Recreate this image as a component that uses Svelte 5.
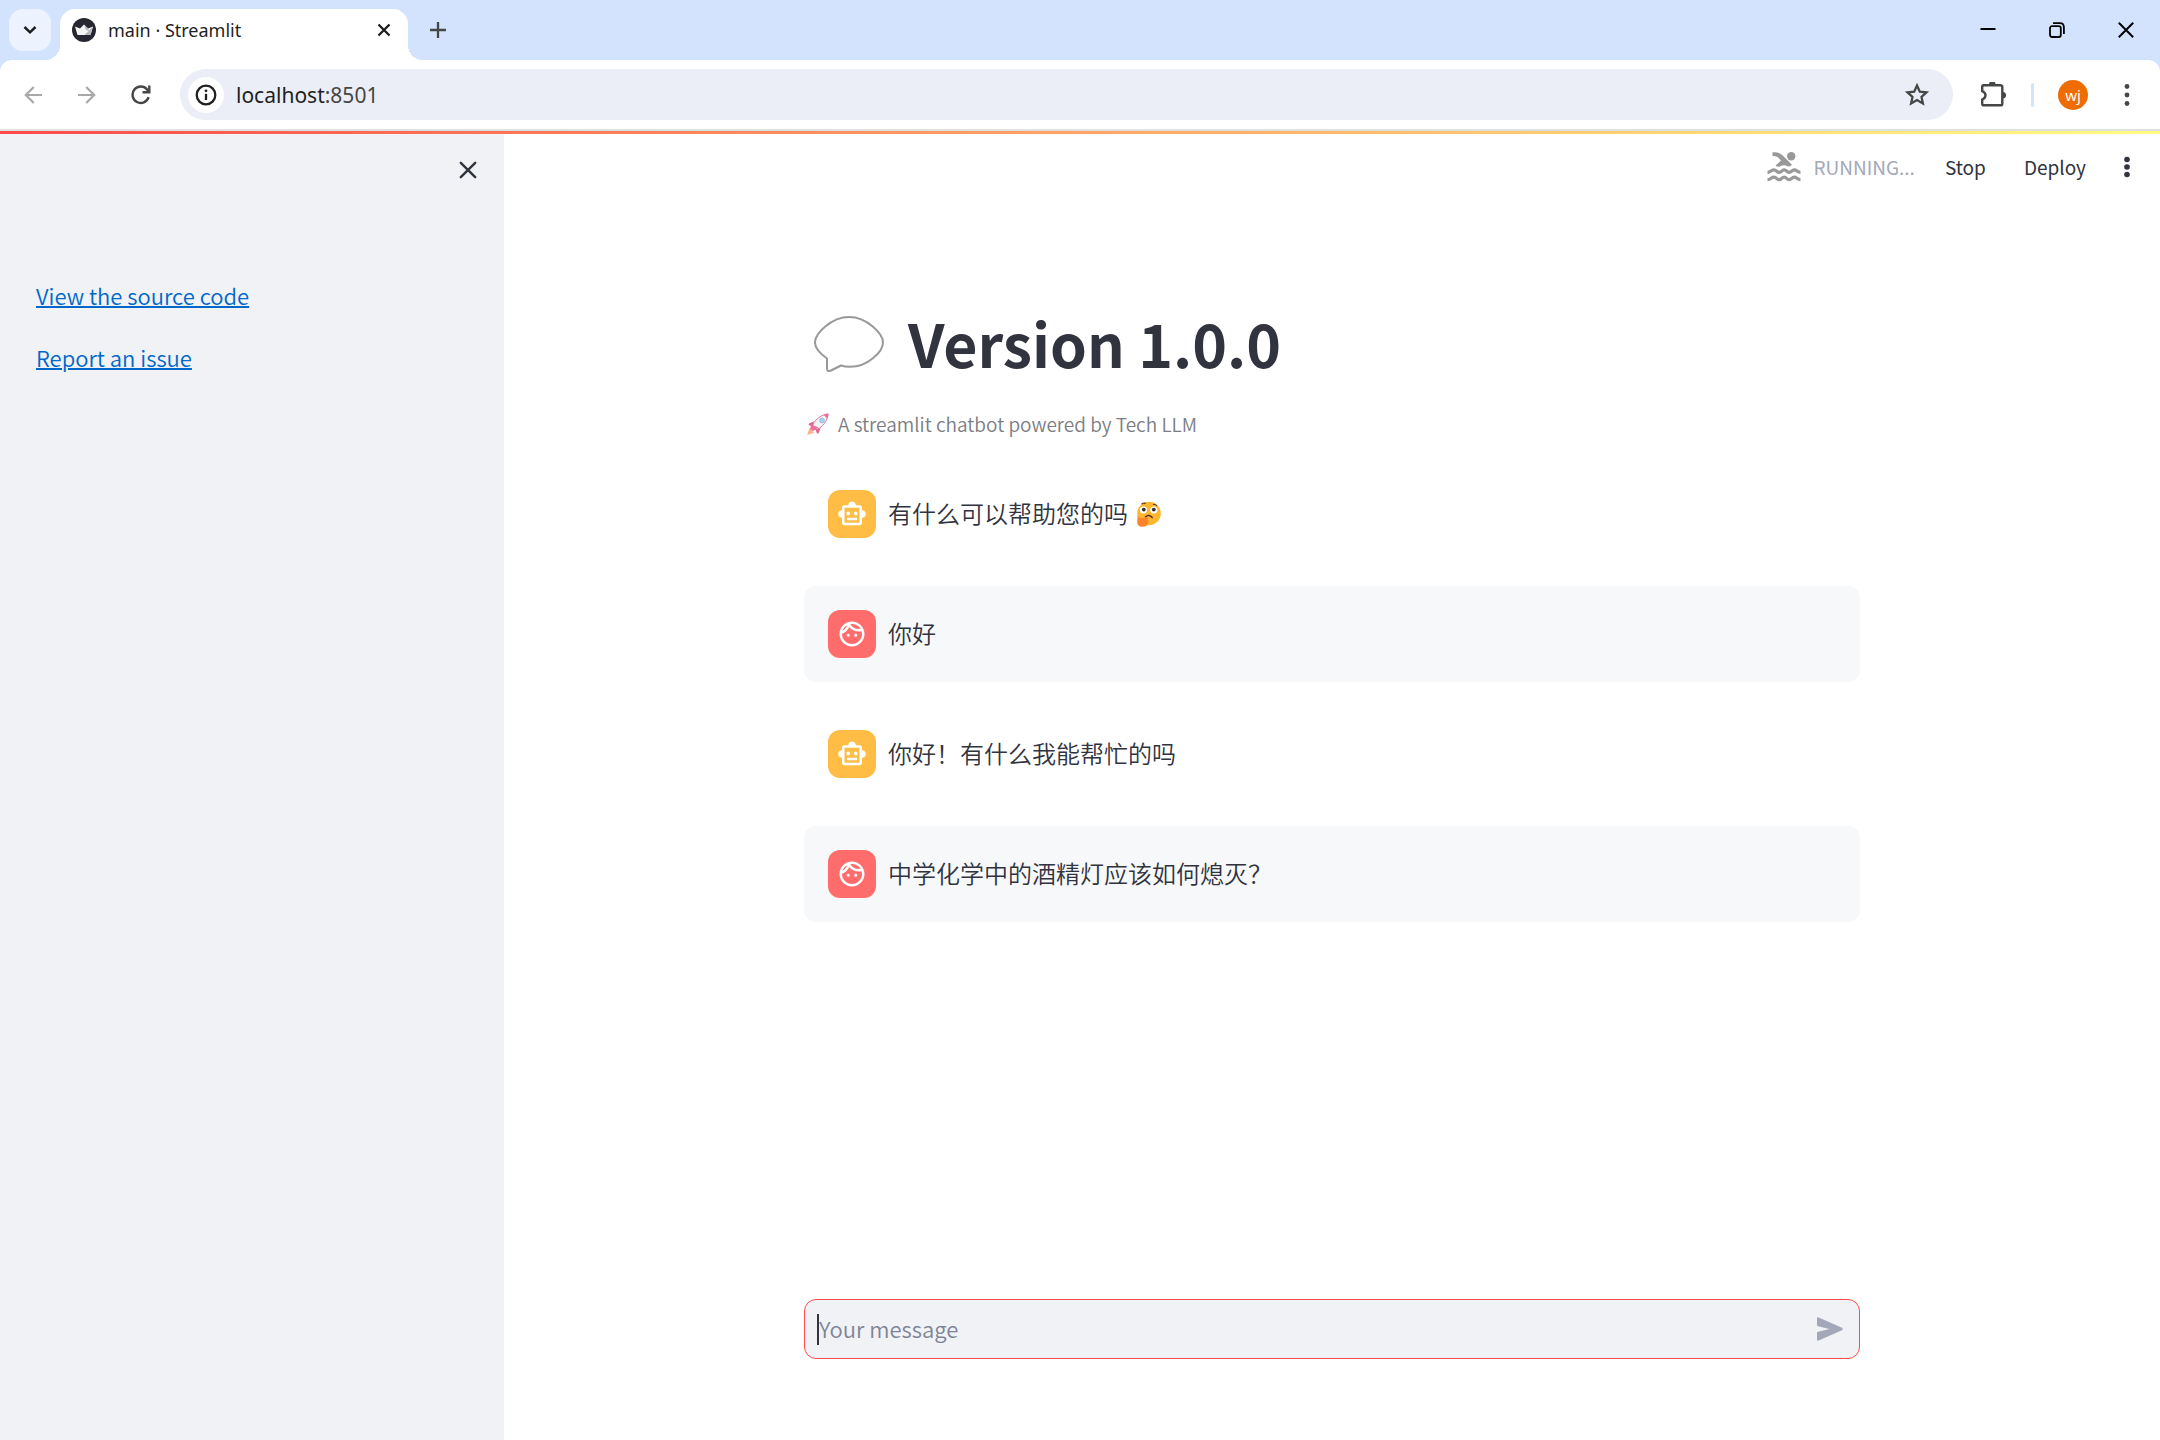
<script lang="ts">
  type Message = { role: 'assistant' | 'user'; text: string; thinking?: boolean };

  const messages: Message[] = [
    { role: 'assistant', text: '有什么可以帮助您的吗', thinking: true },
    { role: 'user', text: '你好' },
    { role: 'assistant', text: '你好！有什么我能帮忙的吗' },
    { role: 'user', text: '中学化学中的酒精灯应该如何熄灭？' }
  ];

  let draft = $state('');
</script>

<div class="window">
  <div class="tabstrip">
    <button class="tab-search" aria-label="Search tabs">
      <svg width="14" height="10" viewBox="0 0 14 10"><path d="M1.5 2 7 7.300 12.500 2" fill="none" stroke="#1c1d20" stroke-width="2.500" /></svg>
    </button>
    <div class="tab">
      <svg class="favicon" width="24" height="24" viewBox="0 0 24 24">
        <circle cx="12" cy="12" r="12" fill="#262730" />
        <path d="M3 8.500 8 10.500 12 6.500 16 10.500 21 8.500 18.500 17H5.500Z" fill="#f4f4f4" />
        <path d="M12 6.500 16 10.500 17.500 13 14 12ZM21 8.500 18.500 17H12.500Z" fill="#b9b9bb" />
      </svg>
      <span class="tab-title">main · Streamlit</span>
      <button class="tab-close" aria-label="Close tab">
        <svg width="14" height="14" viewBox="0 0 14 14"><path d="M1.500 1.500 12.500 12.500M12.500 1.500 1.500 12.500" stroke="#1c1d20" stroke-width="2.300" /></svg>
      </button>
    </div>
    <button class="new-tab" aria-label="New tab">
      <svg width="16" height="16" viewBox="0 0 16 16"><path d="M8 0V16M0 8H16" stroke="#444746" stroke-width="2.300" /></svg>
    </button>
    <div class="window-controls">
      <button aria-label="Minimize"><svg width="16" height="16" viewBox="0 0 16 16"><path d="M.5 7H15.500" stroke="#000" stroke-width="2" /></svg></button>
      <button aria-label="Restore"><svg width="16" height="16" viewBox="0 0 16 16" fill="none" stroke="#000" stroke-width="1.800"><rect x="1" y="4.200" width="10.800" height="10.800" rx="2" /><path d="M4 1.200H11Q14.900 1.200 14.900 5.500V12" /></svg></button>
      <button aria-label="Close window"><svg width="16" height="16" viewBox="0 0 16 16"><path d="M.8.8 15.200 15.200M15.200.8.8 15.200" stroke="#000" stroke-width="2" /></svg></button>
    </div>
  </div>

  <div class="toolbar">
    <button class="nav" aria-label="Back">
      <svg width="18" height="18" viewBox="0 0 18 18" fill="none" stroke="#a8a8a8" stroke-width="2.200"><path d="M18 9H1.800M9.800 1 1.800 9 9.800 17" /></svg>
    </button>
    <button class="nav" aria-label="Forward">
      <svg width="18" height="18" viewBox="0 0 18 18" fill="none" stroke="#a8a8a8" stroke-width="2.200"><path d="M0 9H16.200M8.200 1 16.200 9 8.200 17" /></svg>
    </button>
    <button class="nav" aria-label="Reload">
      <svg width="20" height="20" viewBox="0 0 20 20" fill="none" stroke="#444746" stroke-width="2.400"><path d="M17.600 12.200A8.200 8.200 0 1 1 16 4.400L18 6.600" /><path d="M18.300 .5V7.300H11.500" /></svg>
    </button>
    <div class="omnibox">
      <button class="site-info" aria-label="Site information">
        <svg width="22" height="22" viewBox="0 0 22 22"><circle cx="11" cy="11" r="9.300" fill="none" stroke="#1f1f1f" stroke-width="2.300" /><path d="M11 9.800V16" stroke="#1f1f1f" stroke-width="2.300" /><circle cx="11" cy="6.800" r="1.400" fill="#1f1f1f" /></svg>
      </button>
      <span class="url">localhost<span class="port">:8501</span></span>
      <button class="bookmark" aria-label="Bookmark this page">
        <svg width="26" height="26" viewBox="0 0 26 26"><path d="M13 3.500 15.800 9.700 22.500 10.400 17.500 14.900 18.900 21.500 13 18.100 7.100 21.500 8.500 14.900 3.500 10.400 10.200 9.700Z" fill="none" stroke="#444746" stroke-width="2.300" /></svg>
      </button>
    </div>
    <button class="extensions" aria-label="Extensions">
      <svg width="26" height="26" viewBox="0 0 26 26"><path d="M2.200 4.800Q2.200 3.200 3.800 3.200H19.800Q22.300 3.200 22.300 4.800V21.700Q22.300 23.300 20.800 23.300H3.800Q2.200 23.300 2.200 21.700V17.500Q5.500 16.200 5.500 13.300 5.500 10.400 2.200 9.100Z" fill="none" stroke="#444746" stroke-width="2.400" /><path d="M9 2.500A3.300 3.300 0 0 1 15.600 2.500ZM22.800 10A3.300 3.300 0 0 1 22.800 16.600Z" fill="#444746" /></svg>
    </button>
    <span class="divider"></span>
    <button class="profile">wj</button>
    <button class="menu" aria-label="Browser menu">
      <svg width="6" height="22" viewBox="0 0 6 22" fill="#444746"><circle cx="3" cy="2.500" r="2.400" /><circle cx="3" cy="11" r="2.400" /><circle cx="3" cy="19.500" r="2.400" /></svg>
    </button>
  </div>

  <div class="decoration"></div>

  <div class="app">
    <aside>
      <button class="collapse" aria-label="Close sidebar">
        <svg width="18" height="18" viewBox="0 0 18 18"><path d="M1.800 1.800 16.200 16.200M16.200 1.800 1.800 16.200" stroke="#31333f" stroke-width="2.400" stroke-linecap="round" /></svg>
      </button>
      <nav>
        <a href="#source">View the source code</a>
        <a href="#issue">Report an issue</a>
      </nav>
    </aside>

    <main>
      <header>
        <div class="status">
          <svg width="34" height="30" viewBox="0 0 34 30">
            <g fill="none" stroke="#999" stroke-width="3.200">
              <path d="M.5 20.300C4 20.300 3.800 17.800 6.600 17.800 9.800 17.800 9.800 20.300 12 20.300 15 20.300 14.500 17.800 17 17.800 20 17.800 19.500 20.300 22 20.300 25 20.300 24.500 17.800 27.300 17.800 30 17.800 30 20.300 33.500 20.300" />
              <path d="M.5 27.700C4 27.700 3.800 25.200 6.600 25.200 9.800 25.200 9.800 27.700 12 27.700 15 27.700 14.500 25.200 17 25.200 20 25.200 19.500 27.700 22 27.700 25 27.700 24.500 25.200 27.300 25.200 30 25.200 30 27.700 33.500 27.700" />
            </g>
            <path d="M5.500 .2C10 0 13 .8 15.500 3.300L25 12.800C23 14.300 22.400 15 20.700 14.200 18 12.900 15.500 13 12.800 14.400 11.500 15 10 14.400 8.500 13.700L14 8.500 12.800 7.200C10.800 5.100 9.500 4 5.500 4.100Z" fill="#999" />
            <circle cx="24.200" cy="4.200" r="4.200" fill="#999" />
          </svg>
          <span>RUNNING...</span>
        </div>
        <button class="stop">Stop</button>
        <button class="deploy">Deploy</button>
        <button class="app-menu" aria-label="Main menu">
          <svg width="6" height="22" viewBox="0 0 6 22" fill="#31333f"><circle cx="3" cy="3.500" r="2.800" /><circle cx="3" cy="11" r="2.800" /><circle cx="3" cy="18.500" r="2.800" /></svg>
        </button>
      </header>

      <div class="content">
        <h1>
          <svg width="72" height="58" viewBox="0 0 72 58"><path d="M36 3C18 3 2 20 2 28.500 2 34 7 39.500 14 44.500V54.500C14 57 15.500 57.500 18 56.500L28 51.500C31 52.500 33.500 52.800 37 52.800 55 52.800 70 37.500 70 28.500 70 20 54 3 36 3Z" fill="none" stroke="#999" stroke-width="2" stroke-linejoin="round" /></svg>
          <span>Version 1.0.0</span>
        </h1>
        <p class="caption">
          <svg width="24" height="24" viewBox="0 0 24 24">
            <path d="M3.500 16 1.200 23 8.200 20.800Z" fill="#ffb08e" />
            <path d="M3 11.500 8 9.500 7 14.500 2.500 13ZM12.500 21.500 14.500 16 9.500 17.500 11 21.500Z" fill="#e3618d" />
            <path d="M6.500 17.500C5 12 12 3 22 2 21.500 11.500 12.500 19 6.500 17.500Z" fill="#f5f5f8" stroke="#e07b9e" stroke-width="1" />
            <path d="M17.500 2.700Q20 1.500 22.500 1.500 22.500 4.500 21.300 6.700ZM5.500 12.500 12.500 15.500 7 19 4 17Z" fill="#ee6f97" />
            <circle cx="16" cy="8.500" r="2.500" fill="#a9d3ea" stroke="#83b7d4" stroke-width=".6" />
          </svg>
          <span>A streamlit chatbot powered by Tech LLM</span>
        </p>

        <div class="messages">
          {#each messages as message}
            <article class={message.role}>
              <span class="avatar">
                <svg width="30" height="30" viewBox="0 0 24 24" fill="#fff">
                  {#if message.role === 'assistant'}
                    <path d="M20 9V7c0-1.100-.9-2-2-2h-3c0-1.660-1.340-3-3-3S9 3.340 9 5H6c-1.100 0-2 .9-2 2v2c-1.660 0-3 1.340-3 3s1.340 3 3 3v4c0 1.100.9 2 2 2h12c1.100 0 2-.9 2-2v-4c1.660 0 3-1.340 3-3s-1.340-3-3-3zm-2 10H6V7h12v12zm-9-6c-.83 0-1.500-.67-1.500-1.500S8.170 10 9 10s1.500.67 1.500 1.500S9.830 13 9 13zm7.500-1.500c0 .83-.67 1.500-1.500 1.500s-1.500-.67-1.500-1.500.67-1.500 1.500-1.500 1.500.67 1.500 1.500zM8 15h8v2H8v-2z" />
                  {:else}
                    <path d="M10.250 13c0 .69-.56 1.250-1.250 1.250S7.750 13.690 7.750 13s.56-1.250 1.250-1.250 1.250.56 1.250 1.250zM15 11.750c-.69 0-1.250.56-1.250 1.250s.56 1.250 1.250 1.250 1.250-.56 1.250-1.250-.56-1.250-1.250-1.250zm7 .25c0 5.520-4.480 10-10 10S2 17.520 2 12 6.480 2 12 2s10 4.480 10 10zM10.660 4.120C12.060 6.440 14.600 8 17.500 8c.46 0 .91-.05 1.340-.12C17.440 5.560 14.900 4 12 4c-.46 0-.91.05-1.340.12zM4.420 9.470c1.710-.97 3.030-2.550 3.660-4.440C6.370 6 5.050 7.580 4.420 9.470zM20 12c0-.78-.12-1.530-.33-2.240-.7.15-1.420.24-2.170.24-3.130 0-5.920-1.440-7.760-3.690C8.690 8.870 6.600 10.880 4 11.860c.01.04 0 .09 0 .14 0 4.410 3.590 8 8 8s8-3.590 8-8z" />
                  {/if}
                </svg>
              </span>
              <p>{message.text}</p>
              {#if message.thinking}
                <svg class="emoji" width="26" height="26" viewBox="0 0 26 26">
                  <circle cx="13" cy="12.500" r="11.800" fill="#fdb62f" />
                  <circle cx="7.500" cy="9" r="3.600" fill="#fff" /><circle cx="17.800" cy="9" r="3.600" fill="#fff" />
                  <circle cx="7.800" cy="8.600" r="1.900" fill="#3c2a2e" /><circle cx="17.800" cy="8.600" r="1.900" fill="#3c2a2e" />
                  <path d="M5.500 3.200Q7.500 1.600 9.800 2.600M17 3.500Q19.500 3 21 5" fill="none" stroke="#6b4226" stroke-width="1.200" />
                  <path d="M9.500 15.800Q13 12.800 16.200 16.600" fill="none" stroke="#55301f" stroke-width="1.500" stroke-linecap="round" />
                  <path d="M1.600 15.500Q3 14.500 3.800 17.500L10.500 16.200Q12.800 16.500 11.500 18.600 13.200 20 12 22 11.500 25.800 6.500 25.800 1.200 25.800 1.200 21Z" fill="#ff822d" />
                </svg>
              {/if}
            </article>
          {/each}
        </div>

        <form class="chat-input" onsubmit={(e) => e.preventDefault()}>
          <span class="caret"></span>
          <input type="text" aria-label="Your message" placeholder="Your message" bind:value={draft} />
          <button aria-label="Send message">
            <svg width="28" height="26" viewBox="0 0 28 26"><path d="M1 2.500Q1 .8 2.700 1.400L26 11.700Q27.800 13 26 14.300L2.700 24.600Q1 25.200 1 23.500V17Q1 16 2 15.700L13.500 13 2 10.300Q1 10 1 9Z" fill="#a3a8b8" /></svg>
          </button>
        </form>
      </div>
    </main>
  </div>
</div>

<style>
  :global(body) { margin: 0; background: #fff; }
  .window {
    display: flex;
    flex-direction: column;
    min-height: 100vh;
    font-family: "Noto Sans CJK SC", "Noto Sans", sans-serif;
    font-size: 22px;
    font-weight: 350;
    line-height: 36px;
    color: #31333f;
    background: #d3e3fd;
  }
  button {
    display: flex;
    align-items: center;
    justify-content: center;
    flex-shrink: 0;
    padding: 0;
    border: 0;
    background: none;
    color: inherit;
    font: inherit;
  }
  svg { display: block; flex-shrink: 0; }

  .tabstrip { display: flex; height: 60px; font-family: "Noto Sans", sans-serif; font-weight: 400; }
  .tab-search { width: 42px; height: 42px; margin: 9px 9px 0; border-radius: 14px; background: #ecf3ff; }
  .tab {
    position: relative;
    display: flex;
    align-items: center;
    width: 348px;
    height: 51px;
    margin-top: 9px;
    padding: 0 17px 9px 12px;
    box-sizing: border-box;
    border-radius: 15px 15px 0 0;
    background: #fff;
  }
  .tab::before, .tab::after {
    content: "";
    position: absolute;
    bottom: 0;
    width: 15px;
    height: 15px;
  }
  .tab::before { right: 100%; background: radial-gradient(circle at 0 0, transparent 15px, #fff 15px); }
  .tab::after { left: 100%; background: radial-gradient(circle at 100% 0, transparent 15px, #fff 15px); }
  .tab-title { flex: 1; padding-left: 12px; font-size: 18px; line-height: 24px; color: #1f1f1f; }
  .new-tab { width: 42px; height: 42px; margin: 9px 0 0 9px; }
  .window-controls { display: flex; height: 60px; margin-left: auto; }
  .window-controls button { width: 69px; }

  .toolbar {
    display: flex;
    align-items: center;
    height: 69px;
    padding: 0 10px 0 6px;
    border-bottom: 2px solid #dfe1e1;
    border-radius: 12px 12px 0 0;
    background: #fff;
    font-family: "Noto Sans", sans-serif;
    font-weight: 400;
  }
  .nav { width: 54px; height: 48px; }
  .omnibox {
    display: flex;
    align-items: center;
    flex: 1;
    height: 51px;
    margin: 0 16px 0 12px;
    padding: 0 23px 0 8px;
    border-radius: 26px;
    box-sizing: border-box;
    background: #ebeef7;
  }
  .site-info { width: 36px; height: 36px; border-radius: 50%; background: #fff; }
  .url { flex: 1; padding-left: 12px; font-size: 21px; color: #1f1f1f; }
  .port { color: #474747; }
  .extensions { width: 48px; height: 48px; }
  .divider { width: 3px; height: 24px; margin: 0 24px 0 14px; border-radius: 2px; background: #d3e3fd; }
  .profile { width: 30px; height: 30px; border-radius: 50%; background: #ef6c00; color: #fff; font-size: 15px; line-height: 20px; }
  .menu { width: 46px; height: 48px; margin-left: 16px; }

  .decoration { height: 3px; background: linear-gradient(90deg, #ff4b4b, #fffd80); }

  .app { display: flex; flex: 1; background: #fff; }
  aside { width: 504px; flex-shrink: 0; background: #f0f2f6; }
  .collapse { width: 36px; height: 36px; margin: 18px 18px 0 auto; }
  nav { display: flex; flex-direction: column; align-items: flex-start; gap: 26px; padding: 89px 36px 0; }
  a { color: #0068c9; text-decoration: underline; text-decoration-thickness: 2px; }

  main { display: flex; flex-direction: column; flex: 1; min-width: 0; }
  header { display: flex; align-items: center; justify-content: flex-end; height: 66px; padding-right: 10px; font-size: 19px; font-weight: 400; }
  .status { display: flex; align-items: center; gap: 12px; color: #a3a8b8; }
  .stop { margin-left: 30px; }
  .deploy { margin-left: 38px; }
  .app-menu { width: 46px; height: 48px; margin-left: 18px; }

  .content {
    display: flex;
    flex-direction: column;
    flex: 1;
    width: calc(100% - 96px);
    max-width: 1056px;
    margin: 0 auto;
    padding: 103px 0 81px;
    box-sizing: border-box;
  }
  h1 { display: flex; align-items: center; gap: 23px; margin: 0; padding-left: 9px; font-size: 59px; line-height: 79px; font-weight: 700; }
  .caption { display: flex; align-items: center; gap: 8px; margin: 26px 0; padding-left: 2px; font-size: 19px; line-height: 32px; color: #7c7d84; }
  .messages { display: flex; flex-direction: column; gap: 24px; margin-bottom: 48px; }
  article { display: flex; align-items: center; min-height: 96px; padding: 24px; box-sizing: border-box; border-radius: 12px; }
  article.user { background: #f7f8fa; }
  article p { margin: 0 0 2px 12px; font-size: 24px; }
  .avatar { display: flex; align-items: center; justify-content: center; width: 48px; height: 48px; flex-shrink: 0; border-radius: 12px; background: #ffbd45; }
  .user .avatar { background: #ff6c6c; }
  .emoji { margin-left: 8px; }

  .chat-input {
    display: flex;
    align-items: center;
    height: 60px;
    margin-top: auto;
    padding: 0 15px 0 12px;
    box-sizing: border-box;
    border: 1px solid #ff4b4b;
    border-radius: 12px;
    background: #f0f2f6;
  }
  .caret { width: 2px; height: 31px; background: #31333f; }
  input { flex: 1; min-width: 0; height: 36px; margin-bottom: 2px; padding: 0; border: 0; outline: 0; background: none; color: inherit; font: inherit; }
  input::placeholder { color: #7e8496; opacity: 1; }
</style>
